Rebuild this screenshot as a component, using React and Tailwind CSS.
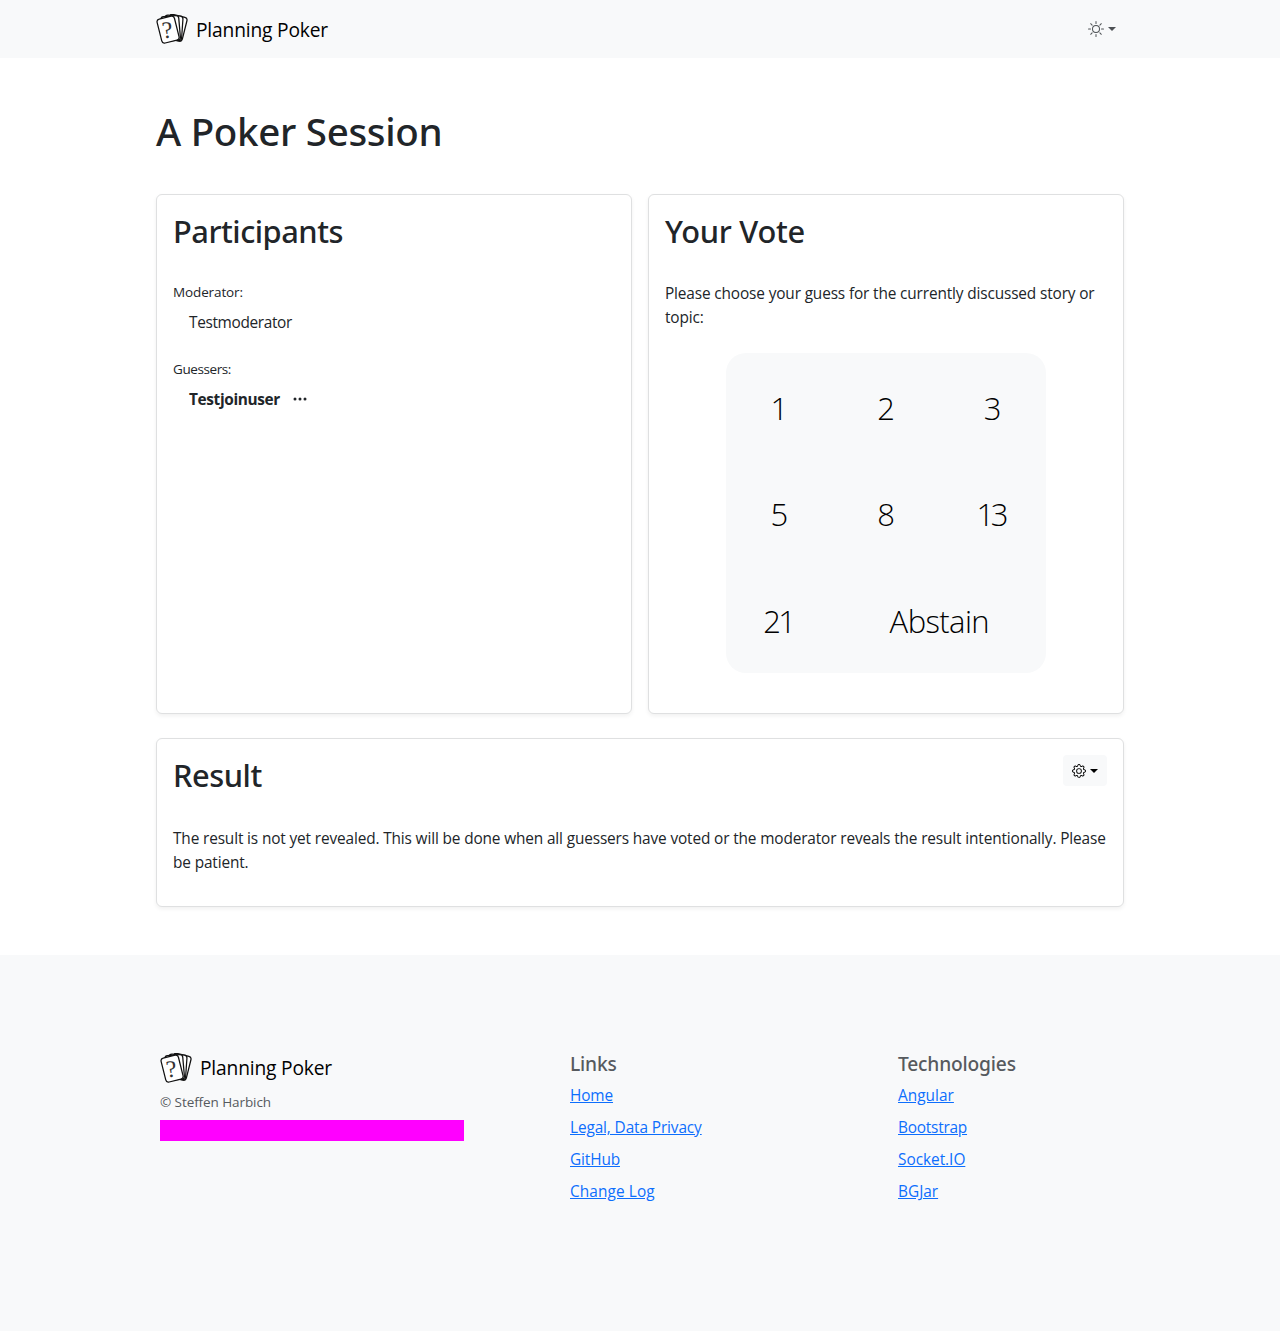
import { BsGear, BsSun, BsThreeDots } from "react-icons/bs";

const votes = [
  { label: "1", tracking: "tracking-normal" },
  { label: "2", tracking: "tracking-normal" },
  { label: "3", tracking: "tracking-normal" },
  { label: "5", tracking: "tracking-normal" },
  { label: "8", tracking: "tracking-normal" },
  { label: "13", tracking: "tracking-[-3.5px] pr-1" },
  { label: "21", tracking: "tracking-[-2.5px] pr-0.5" },
];

const links = [
  { label: "Home", tracking: "tracking-[-0.12px]" },
  { label: "Legal, Data Privacy", tracking: "tracking-[-0.12px]" },
  { label: "GitHub", tracking: "tracking-[-0.13px]" },
  { label: "Change Log", tracking: "tracking-[0.1px]" },
];

const technologies = [
  { label: "Angular", tracking: "tracking-[0.03px]" },
  { label: "Bootstrap", tracking: "tracking-[-0.22px]" },
  { label: "Socket.IO", tracking: "tracking-[-0.03px]" },
  { label: "BGJar", tracking: "tracking-normal" },
];

const fan = [
  { x: 20, y: 13.8, angle: 14 },
  { x: 17.4, y: 13.9, angle: 4 },
  { x: 14.7, y: 14.4, angle: -5 },
  { x: 12.1, y: 15.6, angle: -14 },
];

function CardsLogo() {
  return (
    <svg width="32" height="30" viewBox="0 0 32 30" className="block shrink-0" aria-hidden="true">
      {fan.map((c) => (
        <rect
          key={c.angle}
          x={c.x - 8.9}
          y={c.y - 12.3}
          width="17.8"
          height="24.6"
          rx="2.8"
          fill="#fff"
          stroke="#111"
          strokeWidth="1.25"
          transform={`rotate(${c.angle} ${c.x} ${c.y})`}
        />
      ))}
      <text
        x="11.3"
        y="24"
        textAnchor="middle"
        fontSize="24"
        fill="#333"
        className="font-['Liberation_Serif',serif]"
        transform="rotate(-6 11.3 16)"
      >
        ?
      </text>
    </svg>
  );
}

function Brand() {
  return (
    <a className="flex items-center gap-2 text-black">
      <CardsLogo />
      <span className="pt-px text-[19.2px] leading-[30px] tracking-[-0.17px]">Planning Poker</span>
    </a>
  );
}

function Caret() {
  return <span className="h-0 w-0 border-x-4 border-t-4 border-x-transparent border-t-current" />;
}

function Card({ className = "", children }) {
  return (
    <section
      className={`rounded-md border border-[#dfe0e1] bg-white p-4 shadow-[0_2px_4px_rgba(0,0,0,0.06)] ${className}`}
    >
      {children}
    </section>
  );
}

function CardTitle({ className, children }) {
  return (
    <h2 className={`h-[38px] pt-px font-['Noto_Sans',sans-serif] text-[30.8px] leading-[38px] font-medium ${className}`}>
      {children}
    </h2>
  );
}

function LinkColumn({ title, items }) {
  return (
    <div className="pt-px">
      <h5 className="mb-2 font-['Noto_Sans',sans-serif] text-[19.2px] leading-6 font-medium tracking-[-0.18px] text-[#565a5e]">
        {title}
      </h5>
      <ul className="flex flex-col gap-2">
        {items.map((item) => (
          <li key={item.label} className="h-6 text-[15.4px] leading-6">
            <a className={`text-[#0d6efd] underline ${item.tracking}`}>{item.label}</a>
          </li>
        ))}
      </ul>
    </div>
  );
}

export default function App() {
  return (
    <div className="flex min-h-[1331px] flex-col bg-white font-['Open_Sans',sans-serif] text-[15.4px] leading-6 text-[#212529]">
      <nav className="h-[58px] bg-[#f8f9fa]">
        <div className="mx-auto flex h-full w-[968px] items-center justify-between">
          <Brand />
          <button className="mr-2 flex items-center gap-1 text-[#4d5154]">
            <BsSun size={16} />
            <Caret />
          </button>
        </div>
      </nav>

      <main className="mx-auto w-[968px] pt-[49px]">
        <h1 className="font-['Noto_Sans',sans-serif] text-[38.5px] leading-[48px] font-medium tracking-[-0.3px]">
          A Poker Session
        </h1>

        <div className="mt-[39px] grid grid-cols-2 gap-4">
          <Card className="h-[520px]">
            <CardTitle className="tracking-[-0.48px]">Participants</CardTitle>
            <p className="mt-[33px] text-[13.5px] leading-[21px] tracking-[-0.12px]">Moderator:</p>
            <p className="mt-2 pl-4 tracking-[-0.34px]">Testmoderator</p>
            <p className="mt-6 text-[13.5px] leading-[21px] tracking-[-0.4px]">Guessers:</p>
            <div className="mt-2 flex items-center gap-3 pl-4">
              <span className="font-bold tracking-[-0.36px]">Testjoinuser</span>
              <BsThreeDots size={16} className="mb-0.5" />
            </div>
          </Card>

          <Card className="h-[520px]">
            <CardTitle className="tracking-[-0.25px]">Your Vote</CardTitle>
            <p className="mt-[33px] tracking-[-0.14px]">
              Please choose your guess for the currently discussed story or topic:
            </p>
            <div className="mx-auto mt-[23px] grid h-80 w-80 grid-cols-3 grid-rows-3 rounded-[20px] bg-[#f8f9fa] text-[31px] font-light text-black">
              {votes.map((v) => (
                <button key={v.label} className={`flex items-center justify-center pt-[3px] ${v.tracking}`}>
                  {v.label}
                </button>
              ))}
              <button className="col-span-2 flex items-center justify-center pt-[3px] tracking-[-0.6px]">
                Abstain
              </button>
            </div>
          </Card>
        </div>

        <Card className="mt-6 h-[169px]">
          <div className="flex items-start justify-between">
            <CardTitle className="tracking-[-0.45px]">Result</CardTitle>
            <button className="flex h-[31px] w-11 items-center justify-center gap-1 rounded bg-[#f8f9fa] text-black">
              <BsGear size={14} />
              <Caret />
            </button>
          </div>
          <p className="mt-[34px] tracking-[-0.14px]">
            The result is not yet revealed. This will be done when all guessers have voted or the moderator reveals the
            result intentionally. Please be patient.
          </p>
        </Card>
      </main>

      <footer className="mt-12 grow bg-[#f8f9fa] pt-24">
        <div className="mx-auto grid w-[960px] grid-cols-[410px_328px_1fr]">
          <div className="pt-px">
            <Brand />
            <p className="mt-[9px] text-[13.5px] leading-[21px] tracking-[-0.08px] text-[#565a5e]">
              © Steffen Harbich
            </p>
            <div className="mt-[7px] h-[21px] w-[304px] bg-[#ff00ff]" />
          </div>
          <LinkColumn title="Links" items={links} />
          <LinkColumn title="Technologies" items={technologies} />
        </div>
      </footer>
    </div>
  );
}
